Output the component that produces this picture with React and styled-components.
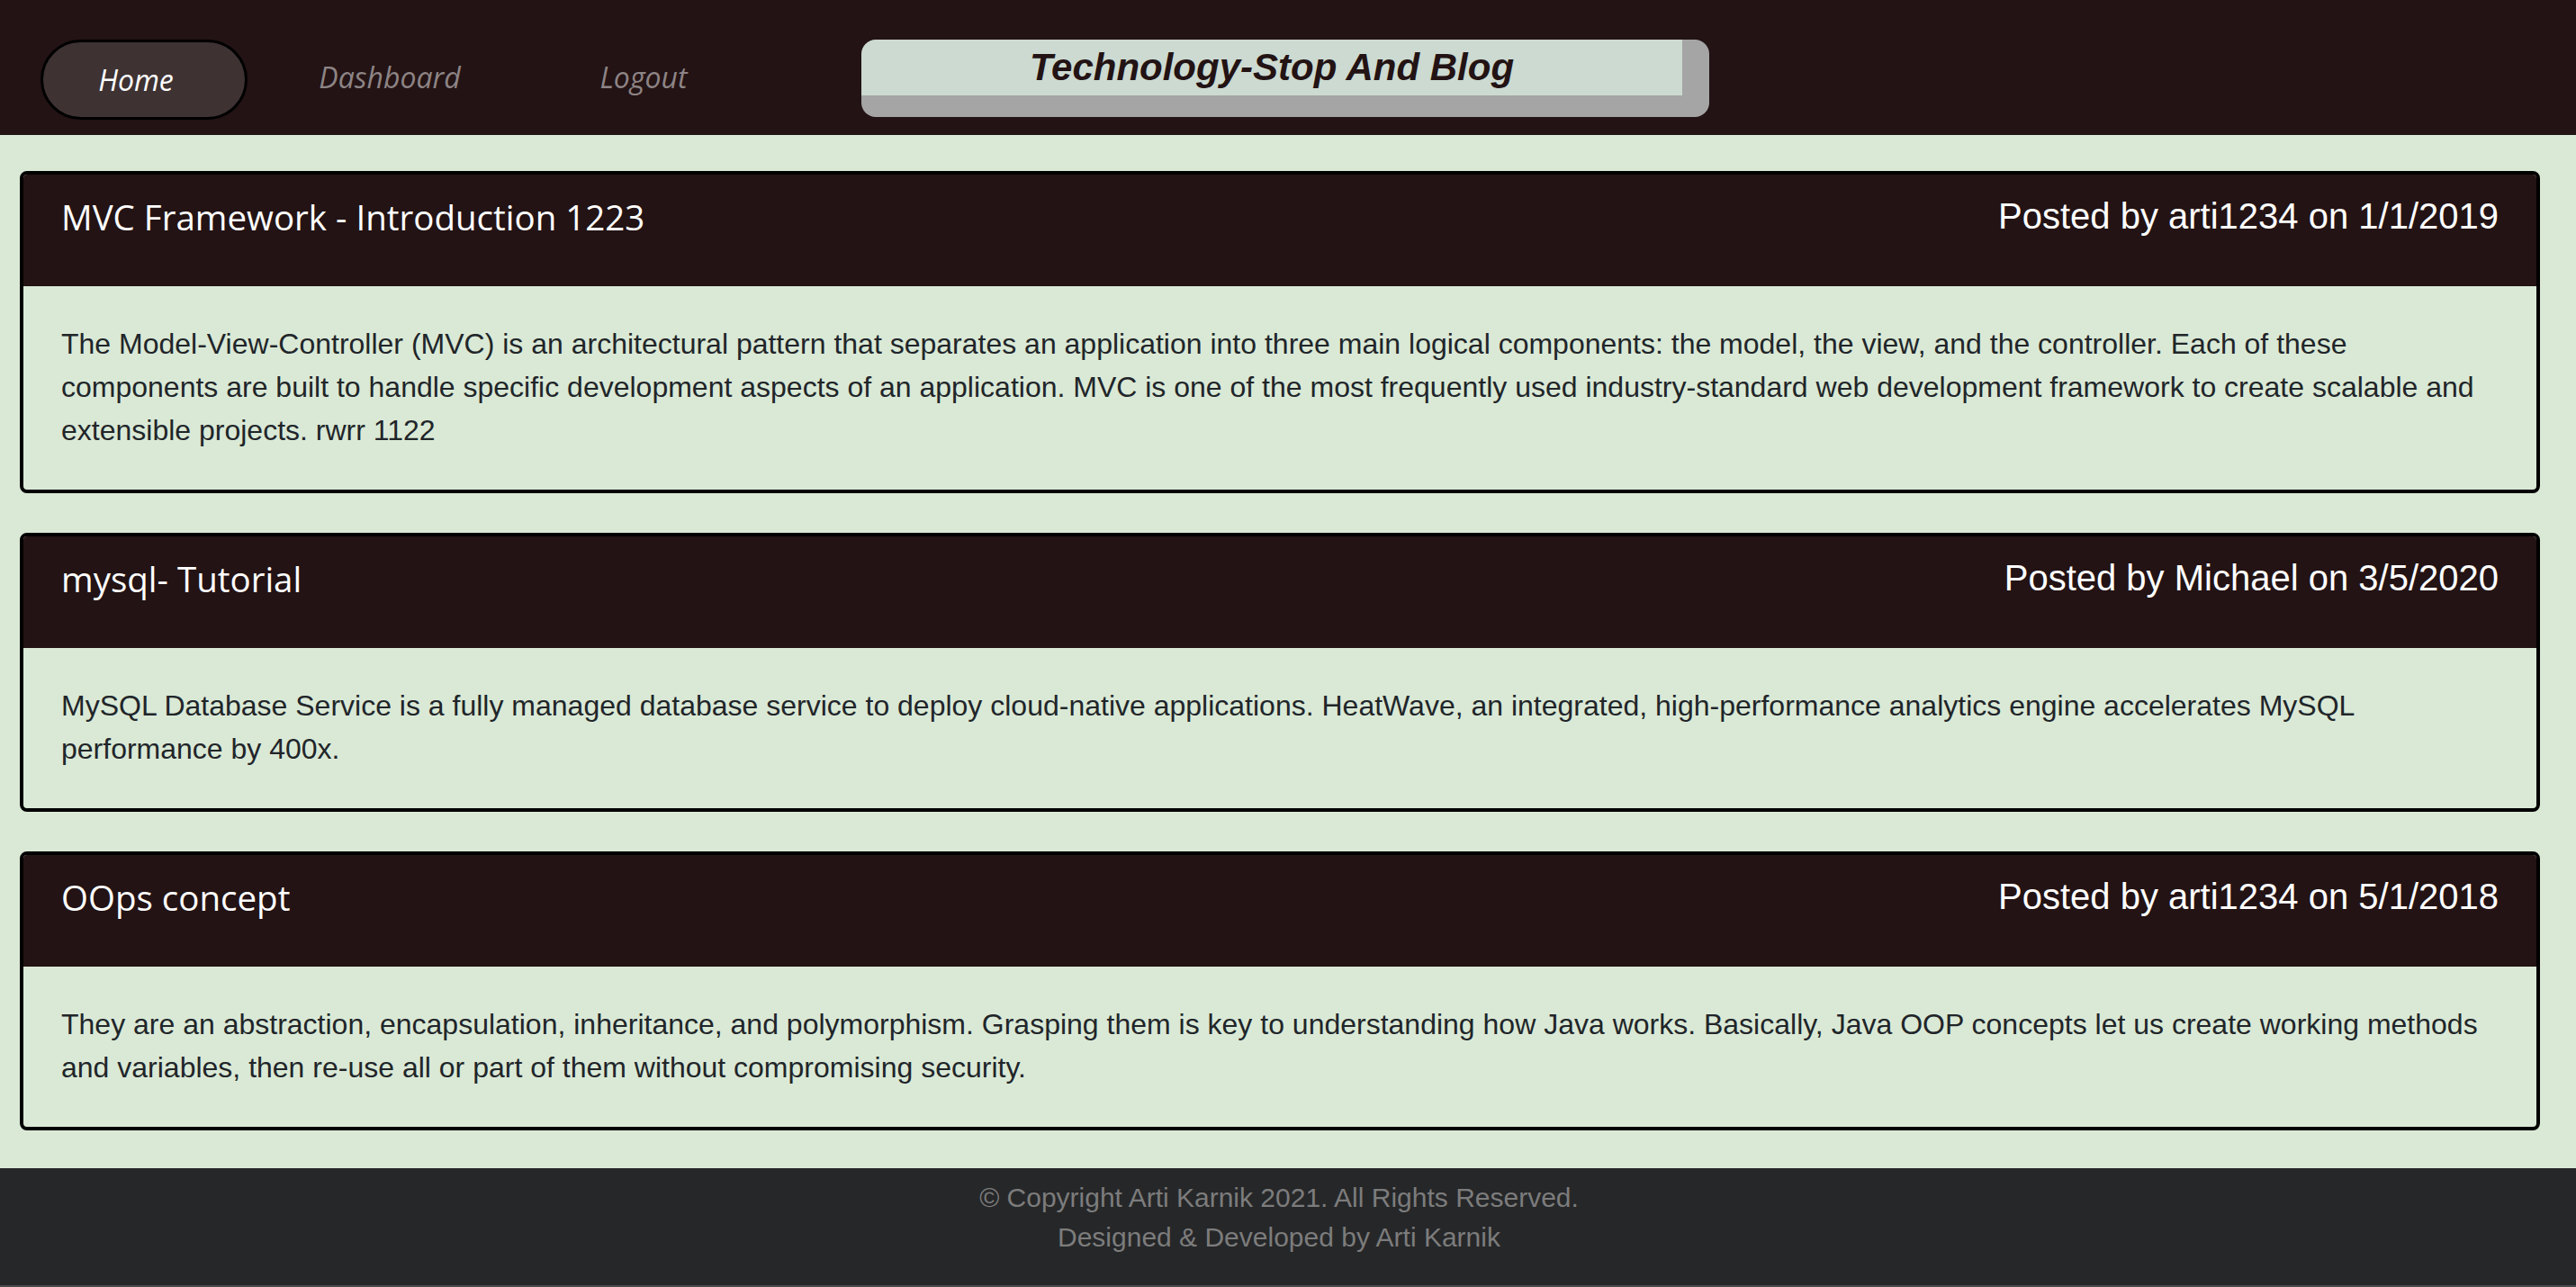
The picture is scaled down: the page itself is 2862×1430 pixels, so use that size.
import React from 'react';
import styled, { createGlobalStyle } from 'styled-components';

const posts = [
  {
    id: 1,
    title: 'MVC Framework - Introduction 1223',
    author: 'arti1234',
    date: '1/1/2019',
    body: 'The Model-View-Controller (MVC) is an architectural pattern that separates an application into three main logical components: the model, the view, and the controller. Each of these components are built to handle specific development aspects of an application. MVC is one of the most frequently used industry-standard web development framework to create scalable and extensible projects. rwrr 1122',
  },
  {
    id: 2,
    title: 'mysql- Tutorial',
    author: 'Michael',
    date: '3/5/2020',
    body: 'MySQL Database Service is a fully managed database service to deploy cloud-native applications. HeatWave, an integrated, high-performance analytics engine accelerates MySQL performance by 400x.',
  },
  {
    id: 3,
    title: 'OOps concept',
    author: 'arti1234',
    date: '5/1/2018',
    body: 'They are an abstraction, encapsulation, inheritance, and polymorphism. Grasping them is key to understanding how Java works. Basically, Java OOP concepts let us create working methods and variables, then re-use all or part of them without compromising security.',
  },
  {
    id: 4,
    title: 'Handlebars Basics',
    author: 'Michael',
    date: '7/2/2020',
    body: 'Handlebars is a simple templating language.',
  },
];

const GlobalStyle = createGlobalStyle`
  html, body {
    margin: 0;
    padding: 0;
    background: #dae9d6;
  }
  * {
    box-sizing: border-box;
  }
`;

const Header = styled.header`
  height: 150px;
  background: #231314;
  display: flex;
  align-items: flex-start;
  padding: 44px 0 0 45px;
`;

const Nav = styled.nav`
  display: flex;
  gap: 52px;
`;

const NavLink = styled.a`
  width: 230px;
  height: 89px;
  display: flex;
  align-items: center;
  justify-content: center;
  padding: 0 18px ${(p) => (p.$active ? '0' : '6px')} 0;
  border: 3px solid ${(p) => (p.$active ? '#000' : 'transparent')};
  border-radius: 45px;
  background: ${(p) => (p.$active ? '#3e3233' : 'transparent')};
  color: ${(p) => (p.$active ? '#ffffff' : '#8d8485')};
  font-family: 'Open Sans', sans-serif;
  font-style: italic;
  font-size: 32px;
  text-decoration: none;
`;

const Brand = styled.div`
  margin-left: 118px;
  width: 942px;
  height: 86px;
  background: #ccdad1;
  border-right: 30px solid #a5a5a5;
  border-bottom: 24px solid #a5a5a5;
  border-radius: 16px;
  text-align: center;
  font-family: 'Liberation Sans', Arial, sans-serif;
  font-weight: 700;
  font-style: italic;
  font-size: 42px;
  line-height: 62px;
  color: #231314;
`;

const Main = styled.main`
  padding: 40px 40px 0 22px;
`;

const Card = styled.article`
  border: 4px solid #000;
  border-radius: 8px;
  overflow: hidden;
  margin-bottom: 44px;
`;

const CardHeader = styled.div`
  display: flex;
  justify-content: space-between;
  align-items: flex-start;
  background: #231314;
  color: #fff;
  padding: 22px 42px 0;
  height: 124px;
`;

const CardTitle = styled.h2`
  margin: 0;
  font-family: 'Open Sans', sans-serif;
  font-weight: 400;
  font-size: 38.5px;
  line-height: 50px;
`;

const Meta = styled.span`
  font-family: 'Liberation Sans', Arial, sans-serif;
  font-size: 40px;
  line-height: 48px;
`;

const CardBody = styled.p`
  margin: 0;
  padding: 40px 42px 42px;
  font-family: 'Liberation Sans', Arial, sans-serif;
  font-size: 32px;
  line-height: 48px;
  color: #212529;
`;

const Footer = styled.footer`
  position: fixed;
  left: 0;
  right: 0;
  bottom: 0;
  height: 132px;
  background: #262729;
  border-bottom: 2px solid #4a4b4d;
  padding: 11px 20px 0 0;
  text-align: center;
  font-family: 'Liberation Sans', Arial, sans-serif;
  font-size: 30px;
  line-height: 44px;
  color: #7c7c7c;
`;

const App = () => (
  <>
    <GlobalStyle />
    <Header>
      <Nav>
        <NavLink $active href="#">Home</NavLink>
        <NavLink href="#">Dashboard</NavLink>
        <NavLink href="#">Logout</NavLink>
      </Nav>
      <Brand>Technology-Stop And Blog</Brand>
    </Header>
    <Main>
      {posts.map((post) => (
        <Card key={post.id}>
          <CardHeader>
            <CardTitle>{post.title}</CardTitle>
            <Meta>Posted by {post.author} on {post.date}</Meta>
          </CardHeader>
          <CardBody>{post.body}</CardBody>
        </Card>
      ))}
    </Main>
    <Footer>
      <div>© Copyright Arti Karnik 2021. All Rights Reserved.</div>
      <div>Designed &amp; Developed by Arti Karnik</div>
    </Footer>
  </>
);

export default App;
